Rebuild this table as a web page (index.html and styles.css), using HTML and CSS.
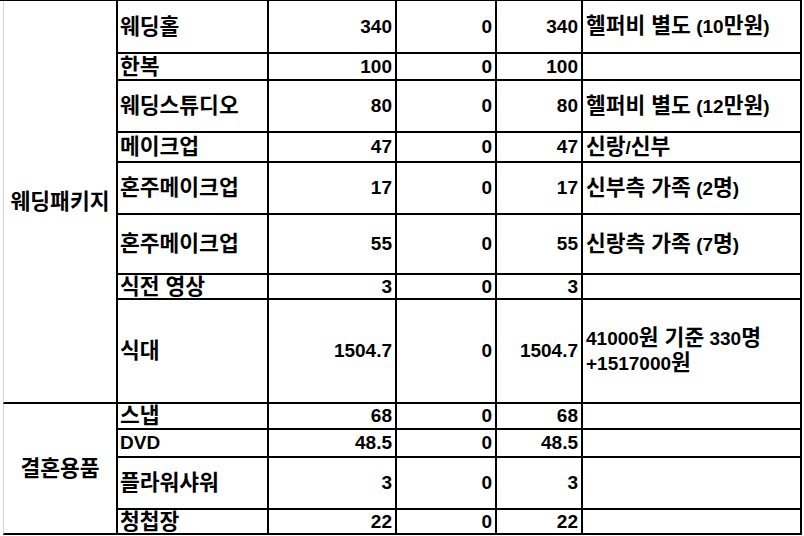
FILE: index.html
```html
<!DOCTYPE html>
<html lang="ko">
<head>
<meta charset="utf-8">
<link rel="stylesheet" href="styles.css">
</head>
<body>
<div class="sheet">
  <div class="grid">
    <div class="c group g1">웨딩패키지</div>
    <div class="c item">웨딩홀</div><div class="c num">340</div><div class="c num">0</div><div class="c num">340</div><div class="c note"><span>헬퍼비 별도<span class="en"> (10</span>만원<span class="en">)</span></span></div>
    <div class="c item">한복</div><div class="c num">100</div><div class="c num">0</div><div class="c num">100</div><div class="c note"></div>
    <div class="c item">웨딩스튜디오</div><div class="c num">80</div><div class="c num">0</div><div class="c num">80</div><div class="c note"><span>헬퍼비 별도<span class="en"> (12</span>만원<span class="en">)</span></span></div>
    <div class="c item">메이크업</div><div class="c num">47</div><div class="c num">0</div><div class="c num">47</div><div class="c note"><span>신랑<span class="en">/</span>신부</span></div>
    <div class="c item">혼주메이크업</div><div class="c num">17</div><div class="c num">0</div><div class="c num">17</div><div class="c note"><span>신부측 가족<span class="en"> (2</span>명<span class="en">)</span></span></div>
    <div class="c item">혼주메이크업</div><div class="c num">55</div><div class="c num">0</div><div class="c num">55</div><div class="c note"><span>신랑측 가족<span class="en"> (7</span>명<span class="en">)</span></span></div>
    <div class="c item">식전 영상</div><div class="c num">3</div><div class="c num">0</div><div class="c num">3</div><div class="c note"></div>
    <div class="c item">식대</div><div class="c num">1504.7</div><div class="c num">0</div><div class="c num">1504.7</div><div class="c note multi"><span><span class="en">41000</span>원 기준<span class="en"> 330</span>명<br><span class="en">+1517000</span>원</span></div>
    <div class="c group g2">결혼용품</div>
    <div class="c item">스냅</div><div class="c num">68</div><div class="c num">0</div><div class="c num">68</div><div class="c note"></div>
    <div class="c item"><span class="en">DVD</span></div><div class="c num">48.5</div><div class="c num">0</div><div class="c num">48.5</div><div class="c note"></div>
    <div class="c item">플라워샤워</div><div class="c num">3</div><div class="c num">0</div><div class="c num">3</div><div class="c note"></div>
    <div class="c item">청첩장</div><div class="c num">22</div><div class="c num">0</div><div class="c num">22</div><div class="c note"></div>
  </div>
</div>
</body>
</html>
```
FILE: styles.css
```css
html, body {
  margin: 0;
  padding: 0;
  background: #ffffff;
}

body {
  font-family: "Liberation Sans", "Noto Sans CJK KR", sans-serif;
  font-weight: bold;
  font-size: 21.5px;
  color: #000000;
}

.sheet {
  width: 802px;
  border-top: 1px solid #000000;
}

.grid {
  margin-left: 3px;
  display: grid;
  grid-template-columns: 115px 151px 128px 100px 86px 219px;
  grid-template-rows: 53px 27px 52px 30px 52px 60px 25px 104px 26px 28px 52px 25px;
}

.c {
  box-sizing: border-box;
  border-right: 2px solid #000000;
  border-bottom: 2px solid #000000;
  display: flex;
  align-items: center;
  white-space: nowrap;
  overflow: hidden;
  line-height: 22px;
}

.group {
  grid-column: 1;
  border-left: 1px solid #d4d4d4;
  justify-content: center;
}

.g1 {
  grid-row: 1 / span 8;
}

.g2 {
  grid-row: 9 / span 4;
}

.item {
  grid-column: 2;
  padding-left: 2px;
}

.num {
  justify-content: flex-end;
  padding-right: 3px;
  font-size: 19px;
}

.en {
  font-size: 19px;
}

.note {
  padding-left: 3px;
}

.multi {
  line-height: 25px;
}
```
